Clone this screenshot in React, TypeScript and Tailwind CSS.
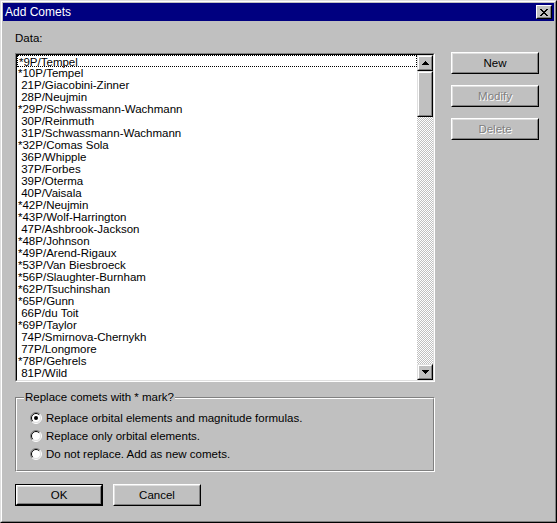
import React from "react";

const COMETS = [
  "*9P/Tempel",
  "*10P/Tempel",
  " 21P/Giacobini-Zinner",
  " 28P/Neujmin",
  "*29P/Schwassmann-Wachmann",
  " 30P/Reinmuth",
  " 31P/Schwassmann-Wachmann",
  "*32P/Comas Sola",
  " 36P/Whipple",
  " 37P/Forbes",
  " 39P/Oterma",
  " 40P/Vaisala",
  "*42P/Neujmin",
  "*43P/Wolf-Harrington",
  " 47P/Ashbrook-Jackson",
  "*48P/Johnson",
  "*49P/Arend-Rigaux",
  "*53P/Van Biesbroeck",
  "*56P/Slaughter-Burnham",
  "*62P/Tsuchinshan",
  "*65P/Gunn",
  " 66P/du Toit",
  "*69P/Taylor",
  " 74P/Smirnova-Chernykh",
  " 77P/Longmore",
  "*78P/Gehrels",
  " 81P/Wild",
  " 88P/Howell",
];

const OUTER_RAISED = "border border-t-white border-l-white border-r-black border-b-black";
const INNER_RAISED =
  "border border-t-[#dfdfdf] border-l-[#dfdfdf] border-r-[#808080] border-b-[#808080] bg-[#c0c0c0]";

function PushButton({
  label,
  disabled,
  isDefault,
}: {
  label: string;
  disabled?: boolean;
  isDefault?: boolean;
}) {
  const face = (
    <div className={`${OUTER_RAISED} h-full w-full`}>
      <div
        className={`${INNER_RAISED} h-full w-full flex items-center justify-center ${
          disabled ? "text-[#808080] [text-shadow:1px_1px_0_#ffffff]" : "text-black"
        }`}
      >
        {label}
      </div>
    </div>
  );
  return (
    <div className={`w-[88px] h-[22px] ${isDefault ? "border border-black" : ""}`}>{face}</div>
  );
}

function Arrow({ down }: { down?: boolean }) {
  return (
    <svg width="7" height="4" viewBox="0 0 7 4">
      {down ? (
        <path d="M0 0h7v1H6v1H5v1H4v1H3V3H2V2H1V1H0z" fill="#000" />
      ) : (
        <path d="M3 0h1v1h1v1h1v1h1v1H0V3h1V2h1V1h1z" fill="#000" />
      )}
    </svg>
  );
}

function ScrollButton({ down }: { down?: boolean }) {
  return (
    <div className="h-[16px] w-[16px] border border-t-[#dfdfdf] border-l-[#dfdfdf] border-r-black border-b-black">
      <div className="h-full w-full border border-t-white border-l-white border-r-[#808080] border-b-[#808080] bg-[#c0c0c0] flex items-center justify-center">
        <Arrow down={down} />
      </div>
    </div>
  );
}

function Radio({ checked }: { checked?: boolean }) {
  return (
    <svg width="12" height="12" viewBox="0 0 12 12" className="shrink-0">
      <circle cx="6" cy="6" r="5" fill="#ffffff" />
      <path d="M2.1 9.9 A5.5 5.5 0 0 1 9.9 2.1" stroke="#808080" strokeWidth="1" fill="none" />
      <path d="M9.9 2.1 A5.5 5.5 0 0 1 2.1 9.9" stroke="#ffffff" strokeWidth="1" fill="none" />
      <path d="M2.8 9.2 A4.5 4.5 0 0 1 9.2 2.8" stroke="#000000" strokeWidth="1" fill="none" />
      <path d="M9.2 2.8 A4.5 4.5 0 0 1 2.8 9.2" stroke="#dfdfdf" strokeWidth="1" fill="none" />
      {checked && <circle cx="6" cy="6" r="2" fill="#000" />}
    </svg>
  );
}

export default function App() {
  return (
    <div className="w-[557px] h-[523px] font-['Liberation_Sans',Arial,sans-serif] text-[11.5px] leading-[14px] text-black">
      <div className="h-full w-full border border-t-[#dfdfdf] border-l-[#dfdfdf] border-r-black border-b-black">
        <div className="h-full w-full border border-t-white border-l-white border-r-[#808080] border-b-[#808080] bg-[#c0c0c0] p-px flex flex-col">
          {/* Title bar */}
          <div className="h-[18px] bg-[#000080] flex items-center justify-between pl-[2px] pr-[2px]">
            <span className="text-white text-[12px]">Add Comets</span>
            <div className="h-[14px] w-[16px] border border-t-white border-l-white border-r-black border-b-black">
              <div className="h-full w-full border border-t-[#c0c0c0] border-l-[#c0c0c0] border-r-[#808080] border-b-[#808080] bg-[#c0c0c0] flex items-center justify-center">
                <svg width="8" height="7" viewBox="0 0 8 7">
                  <path
                    d="M0 0h2v1h1v1h2V1h1V0h2v1H7v1H6v1H5v1h1v1h1v1h1v1H6V6H5V5H3v1H2v1H0V6h1V5h1V4h1V3H2V2H1V1H0z"
                    fill="#000"
                  />
                </svg>
              </div>
            </div>
          </div>

          {/* Body */}
          <div className="flex-1 pl-[12px] flex flex-col">
            <div className="flex gap-[16px]">
              <div className="flex flex-col pt-[10px] w-[420px]">
                <div className="h-[14px] mb-[8px]">Data:</div>
                {/* Listbox */}
                <div className="h-[329px] border border-t-[#808080] border-l-[#808080] border-r-white border-b-white">
                  <div className="h-full w-full border border-t-black border-l-black border-r-[#dfdfdf] border-b-[#dfdfdf] bg-white flex">
                    <div className="flex-1 overflow-hidden">
                      {COMETS.map((c, i) => (
                        <div
                          key={c}
                          className={`h-[12px] leading-[12px] whitespace-pre pl-px ${
                            i === 0 ? "border border-dotted border-black pl-0 leading-[10px]" : ""
                          }`}
                        >
                          {c}
                        </div>
                      ))}
                    </div>
                    <div className="w-[16px] h-full flex flex-col">
                      <ScrollButton />
                      <div className="h-[46px] w-[16px] border border-t-[#dfdfdf] border-l-[#dfdfdf] border-r-black border-b-black">
                        <div className="h-full w-full border border-t-white border-l-white border-r-[#808080] border-b-[#808080] bg-[#c0c0c0]" />
                      </div>
                      <div className="flex-1 bg-[repeating-conic-gradient(#c0c0c0_0%_25%,#ffffff_0%_50%)] bg-[length:2px_2px]" />
                      <ScrollButton down />
                    </div>
                  </div>
                </div>
              </div>

              {/* Side buttons */}
              <div className="flex flex-col gap-[11px] pt-[31px]">
                <PushButton label="New" />
                <PushButton label="Modify" disabled />
                <PushButton label="Delete" disabled />
              </div>
            </div>

            {/* Group box */}
            <div className="relative mt-[15px] w-[420px] h-[75px] border border-t-[#808080] border-l-[#808080] border-r-white border-b-white">
              <div className="h-full w-full border border-t-white border-l-white border-r-[#808080] border-b-[#808080] pt-[10px] pl-[13px] flex flex-col">
                {[
                  { label: "Replace orbital elements and magnitude formulas.", checked: true },
                  { label: "Replace only orbital elements." },
                  { label: "Do not replace. Add as new comets." },
                ].map((r) => (
                  <div key={r.label} className="h-[18px] flex items-center gap-[4px]">
                    <Radio checked={r.checked} />
                    <span>{r.label}</span>
                  </div>
                ))}
              </div>
              <span className="absolute left-[8px] top-[-8px] bg-[#c0c0c0] px-[1px]">
                Replace comets with * mark?
              </span>
            </div>

            {/* Bottom buttons */}
            <div className="flex gap-[10px] mt-[12px]">
              <PushButton label="OK" isDefault />
              <PushButton label="Cancel" />
            </div>
          </div>
        </div>
      </div>
    </div>
  );
}
